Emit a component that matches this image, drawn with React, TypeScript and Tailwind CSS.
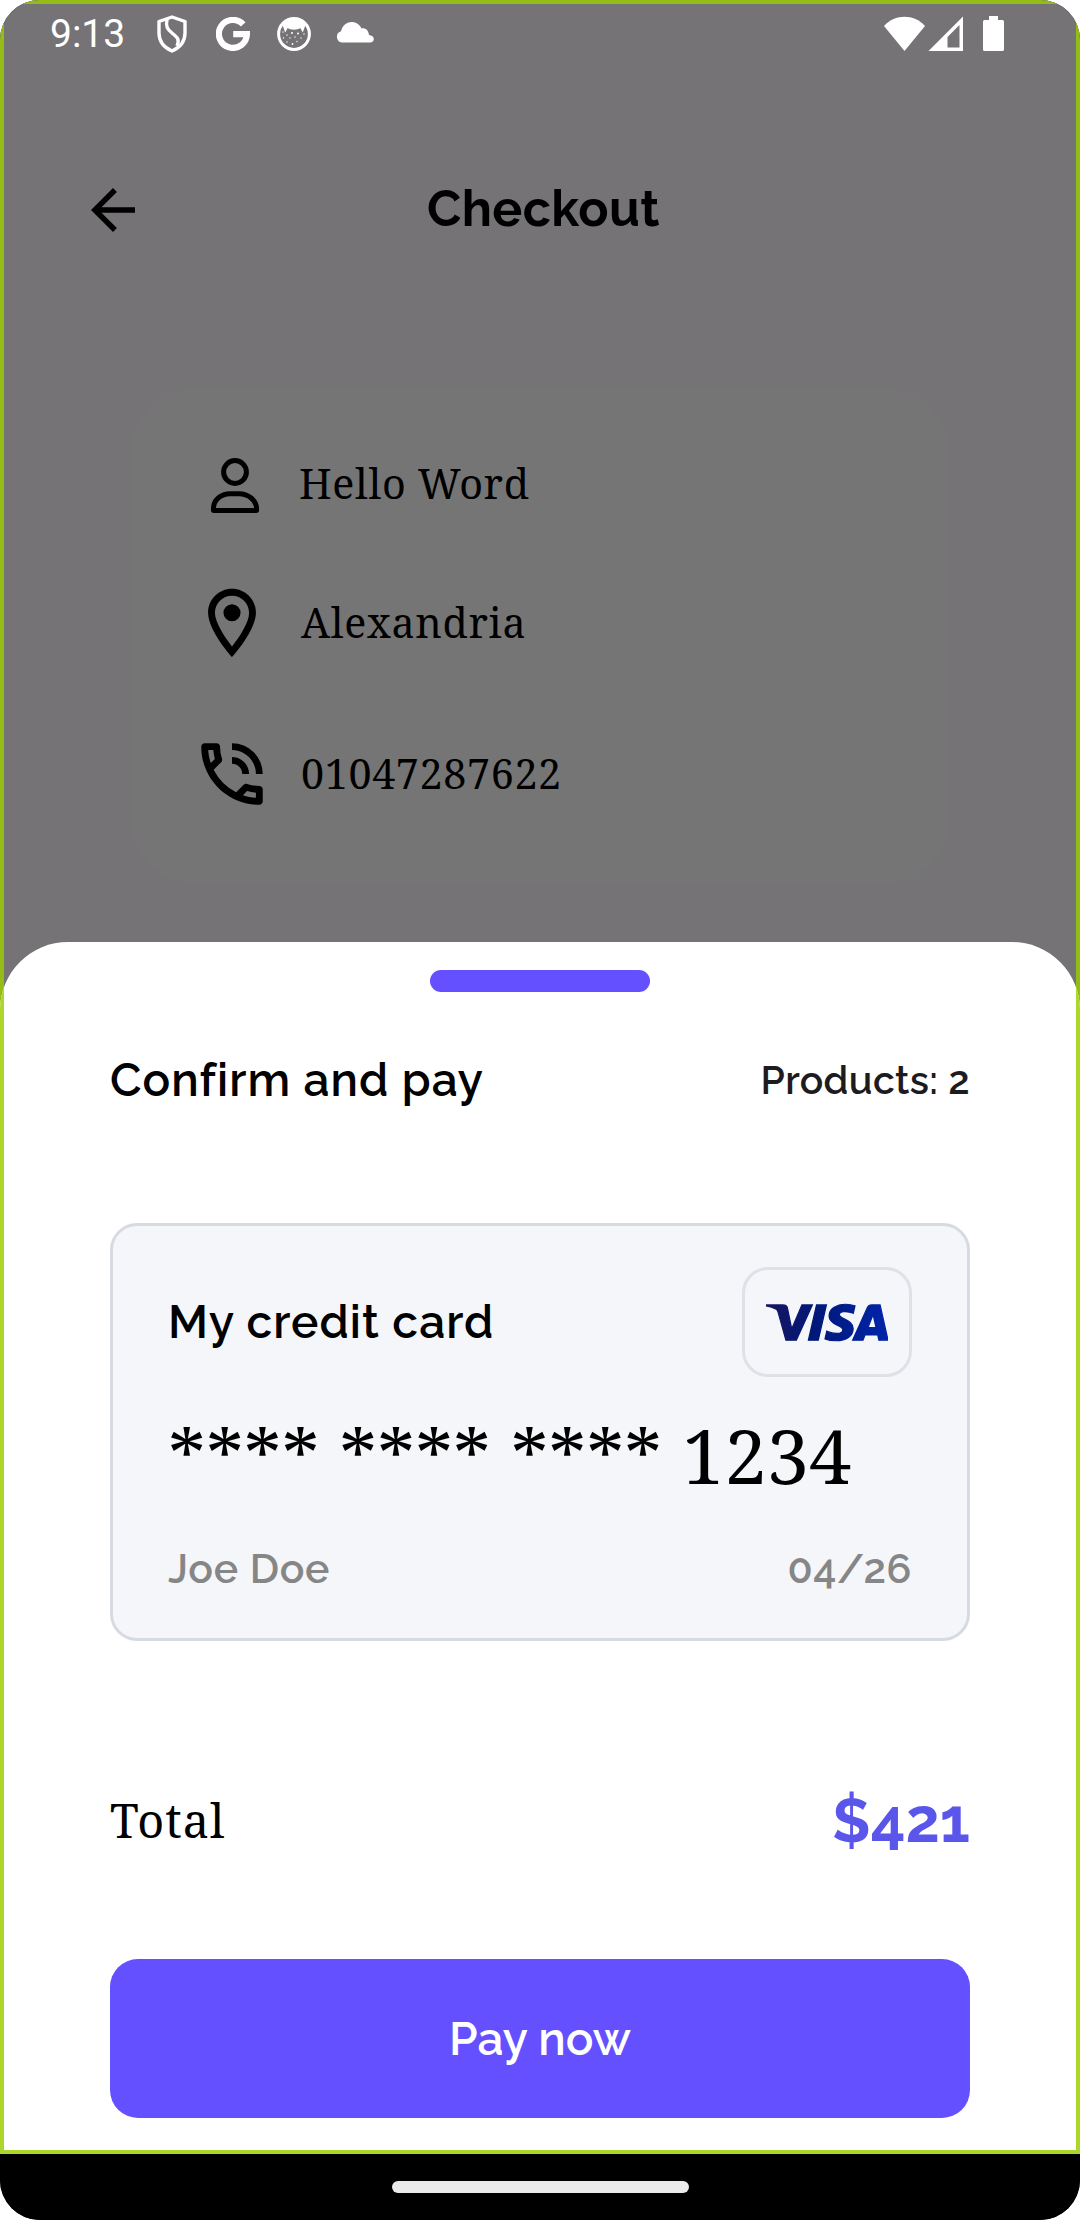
import React from "react";
import { MdArrowBack, MdOutlineLocationOn, MdOutlinePhoneInTalk } from "react-icons/md";
import { SiVisa } from "react-icons/si";

const sans = "font-['Raleway','Lato',sans-serif] whitespace-nowrap";
const serif = "font-['Noto_Serif','DejaVu_Serif_Condensed','DejaVu_Serif',serif] whitespace-nowrap";

function ShieldIcon() {
  return (
    <svg width="32" height="38" viewBox="0 0 32 38" fill="none" stroke="#fff" strokeWidth="3.4" strokeLinejoin="round">
      <path d="M16 2 29 6.5V18c0 8-5 14.500-13 18C8 32.500 3 26 3 18V6.500z" />
      <path d="M11 4.500c-1.500 7 .5 10 5 13.500 5 4 8 6 5 13" />
    </svg>
  );
}

function GoogleIcon() {
  return (
    <svg width="34" height="34" viewBox="0 0 34 34" fill="none" stroke="#fff" strokeWidth="6.200">
      <path d="M27.200 7.400A14 14 0 1 0 30.900 17.200H17.200" />
    </svg>
  );
}

function FaceIcon() {
  return (
    <svg width="34" height="34" viewBox="0 0 34 34">
      <circle cx="17" cy="17" r="15.400" fill="none" stroke="#fff" strokeWidth="3" />
      <path d="M5 6.500C12-1 22-1 29 6.500L25.800 15.500l-2.500-4.500c-3 2.300-9.600 2.300-12.600 0l-2.500 4.500z" fill="#fff" />
      <g fill="#fff">
        <circle cx="6" cy="15" r=".7" /><circle cx="10" cy="18" r=".7" /><circle cx="15" cy="16" r="1" />
        <circle cx="21" cy="16.500" r="1" /><circle cx="27" cy="17" r=".7" /><circle cx="6.500" cy="21" r=".7" />
        <circle cx="13" cy="21" r=".7" /><circle cx="18" cy="20" r=".7" /><circle cx="24" cy="21" r=".7" />
        <circle cx="10" cy="25" r=".7" /><circle cx="15.500" cy="27" r=".9" /><circle cx="20" cy="24.500" r=".7" />
      </g>
    </svg>
  );
}

function CloudIcon() {
  return (
    <svg width="38" height="21" viewBox="0 0 38 21" fill="#fff">
      <path d="M6 20.500a5.800 5.800 0 0 1-1-11.300C6.500 3.500 10.500 0 15.500 0c4.500 0 8.300 2.500 10 6.500 4-.8 7 2 7.500 6.500 2.800.2 4.800 1.700 4.800 3.900 0 2.100-1.600 3.600-3.800 3.600z" />
    </svg>
  );
}

function PersonIcon() {
  return (
    <svg width="50" height="56" viewBox="0 0 50 56" fill="none" stroke="#000" strokeWidth="5">
      <circle cx="25" cy="14" r="11.400" />
      <path d="M3.400 51.600V51C3.400 42 11 35.700 20 35.700h9c9 0 17.600 6.300 17.600 15.300v1.100a.5.5 0 0 1-.5.5H3.900a.5.500 0 0 1-.5-.5z" strokeLinejoin="round" />
    </svg>
  );
}

function StatusBar() {
  return (
    <div className="flex h-[58px] items-center pl-[46px] pr-[72px] pt-[2px]">
      <span className="w-[106px] font-['Roboto',sans-serif] text-[39px] leading-none text-white">9:13</span>
      <div className="flex flex-1 items-center">
        <ShieldIcon />
        <span className="ml-[28px]"><GoogleIcon /></span>
        <span className="ml-[27px]"><FaceIcon /></span>
        <span className="-mt-[3px] ml-[25px]"><CloudIcon /></span>
      </div>
      <svg width="120" height="36" viewBox="0 0 120 36" fill="#fff">
        <path d="M0 10C11-2.300 30-2.300 41 10L20.500 35z" />
        <path fillRule="evenodd" d="M79 .5V35H44.500zM75.500 9 63.500 21V31.500h12z" />
        <path d="M105 0h9v4h4.500q1.500 0 1.500 1.500v28q0 1.500-1.500 1.500h-18q-1.500 0-1.500-1.500v-28Q99 4 100.500 4h4.500z" />
      </svg>
    </div>
  );
}

function ContactCard() {
  return (
    <div className="mx-[126px] mt-[127px] h-[498px] rounded-[70px] bg-[#757575] pl-[61px]">
      <div className="flex h-[140px] items-center pt-[57px]">
        <span className="ml-[19px] w-[89px]"><PersonIcon /></span>
        <span className={`${serif} mb-[3px] text-[41.25px] leading-none tracking-[0.65px]`}>Hello Word</span>
      </div>
      <div className="flex h-[140px] items-center pt-[51px]">
        <MdOutlineLocationOn className="mr-[28px] size-[82px]" />
        <span className={`${serif} text-[41.25px] leading-none tracking-[0.65px]`}>Alexandria</span>
      </div>
      <div className="flex h-[158px] items-center pt-[56px]">
        <MdOutlinePhoneInTalk className="mr-[28px] size-[82px]" />
        <span className={`${serif} mb-[1px] text-[41.25px] leading-none tracking-[0.65px]`}>01047287622</span>
      </div>
    </div>
  );
}

function VisaBadge() {
  return (
    <div className="flex h-[110px] w-[170px] items-center justify-center rounded-[26px] border-[3px] border-[#dfe1e6]">
      <svg className="size-0">
        <defs>
          <linearGradient id="visa" x1="0" x2="1">
            <stop offset="0" stopColor="#181560" />
            <stop offset=".4" stopColor="#001878" />
            <stop offset="1" stopColor="#0024aa" />
          </linearGradient>
        </defs>
      </svg>
      <SiVisa
        className="h-[113px] w-[122px] shrink-0 blur-[0.6px]"
        preserveAspectRatio="none"
        fill="url(#visa)"
        stroke="url(#visa)"
        strokeWidth="0.25"
      />
    </div>
  );
}

function PaymentSheet() {
  return (
    <div className="absolute inset-x-0 bottom-[66px] top-[942px] flex flex-col overflow-hidden rounded-t-[68px] bg-white px-[110px] pt-[28px]">
      <div className="pointer-events-none absolute inset-0 border-x-4 border-b-4 border-[#acd62a]" />
      <div className="h-[22px] w-[220px] self-center rounded-[11px] bg-[#6450ff]" />
      <div className="mt-[58px] flex h-[60px] items-center justify-between">
        <span className={`${sans} text-[46px] font-semibold leading-[60px] tracking-[1.05px]`}>Confirm and pay</span>
        <span className={`${sans} text-[39px] font-semibold leading-[60px] tracking-[0.35px] text-[#1d1b20] oldstyle-nums`}>
          Products: 2
        </span>
      </div>
      <div className="mt-[113px] flex h-[418px] flex-col rounded-[27px] border-[3px] border-[#d6dae1] bg-[#f5f6fa] pl-[55px] pr-[55px] pt-[41px]">
        <div className="flex items-center justify-between">
          <span className={`${sans} text-[46px] font-semibold leading-[60px] tracking-[1.05px]`}>My credit card</span>
          <VisaBadge />
        </div>
        <div className={`${serif} mt-[33px] text-[75.6px] leading-[90px] tracking-[0.1px]`}>**** **** **** 1234</div>
        <div className="mt-[39px] flex justify-between text-[#868686]">
          <span className={`${sans} text-[41px] font-semibold leading-[60px] tracking-[0.7px]`}>Joe Doe</span>
          <span className={`${sans} text-[41px] font-semibold leading-[60px] tracking-[0.5px] oldstyle-nums`}>04/26</span>
        </div>
      </div>
      <div className="mt-[139px] flex h-[80px] items-center justify-between">
        <span className={`${serif} text-[46.75px] leading-none tracking-[1px]`}>Total</span>
        <span className={`${sans} text-[61px] font-bold leading-none text-[#5b56ea] oldstyle-nums`}>$421</span>
      </div>
      <button className="mt-[99px] h-[159px] rounded-[28px] bg-[#6450ff] text-white">
        <span className={`${sans} text-[46px] font-semibold leading-none tracking-[0.1px]`}>Pay now</span>
      </button>
    </div>
  );
}

export default function App() {
  return (
    <div className="h-[2220px] w-[1080px] bg-white">
      <div className="relative flex h-full flex-col overflow-hidden rounded-[40px] bg-black text-black">
        <main className="h-[2154px] border-x-4 border-t-4 border-[#93bd14] bg-[#757376]">
          <StatusBar />
          <header className="mt-[98px] flex h-[100px] items-center pl-[76px]">
            <MdArrowBack className="size-[66px]" />
            <h1 className={`${sans} mb-[3px] ml-[281px] text-[50px] font-bold leading-none tracking-[0.4px]`}>Checkout</h1>
          </header>
          <ContactCard />
        </main>
        <PaymentSheet />
        <footer className="flex h-[66px] items-start justify-center bg-black pt-[27px]">
          <div className="h-[12px] w-[297px] rounded-full bg-[#ebebeb]" />
        </footer>
      </div>
    </div>
  );
}
